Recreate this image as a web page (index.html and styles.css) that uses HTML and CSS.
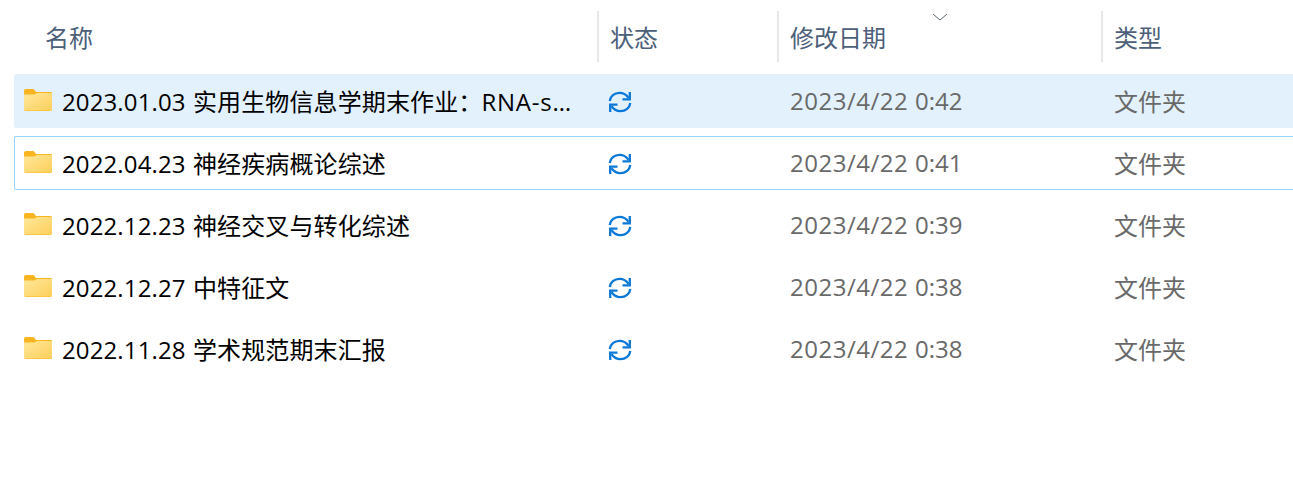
FILE: index.html
```html
<!DOCTYPE html>
<html lang="zh-CN">
<head>
<meta charset="utf-8">
<title>文件列表</title>
<link rel="stylesheet" href="styles.css">
</head>
<body>
<svg class="defs" width="0" height="0" aria-hidden="true">
  <defs>
    <linearGradient id="fg" x1="0" y1="0" x2="1" y2="1">
      <stop offset="0" stop-color="#ffe89a"/>
      <stop offset="1" stop-color="#fdcf5c"/>
    </linearGradient>
    <symbol id="folder" viewBox="0 0 28 22">
      <path d="M0 2.200C0 .9.9 0 2 0h6.500c1 0 1.500.5 2.200 1.200L12 3h14.500c.9 0 1.500.6 1.500 1.500V20c0 1.100-.8 2-2 2H2c-1.200 0-2-.9-2-2z" fill="#f9b51f"/>
      <path d="M0 5.500h10.500L13 4h14c.6 0 1 .4 1 1v15c0 .9-.7 1.400-1.500 1.400h-25C.7 21.400 0 20.900 0 20z" fill="url(#fg)"/>
    </symbol>
    <symbol id="sync" viewBox="0 0 24 22">
      <g fill="none" stroke="#0a78d7" stroke-width="2.300">
        <path d="M1.700 10C2.300 5.200 6.300 1.800 11.500 1.800c3.800 0 6.800 1.700 9 5"/>
        <path d="M21.800 1v7.300h-7.300"/>
        <path d="M22.300 12c-.6 4.800-4.600 8.200-9.800 8.200-3.800 0-6.800-1.700-9-5"/>
        <path d="M2.200 21v-7.300h7.300"/>
      </g>
    </symbol>
  </defs>
</svg>
<main class="list">
  <header class="head">
    <div class="hcell hname">名称</div>
    <div class="hcell hstatus">状态</div>
    <div class="hcell hdate">修改日期
      <svg class="sort" width="16" height="8" viewBox="0 0 16 8"><path d="M1 1l7 6 7-6" fill="none" stroke="#5a6570" stroke-width="1"/></svg>
    </div>
    <div class="hcell htype">类型</div>
  </header>
  <div class="row selected">
    <div class="cname"><svg class="ficon"><use href="#folder"/></svg><span class="ntext">2023.01.03 实用生物信息学期末作业：<span class="latin">RNA-seq</span>数据分析报告</span></div>
    <div class="cstatus"><svg class="sicon"><use href="#sync"/></svg></div>
    <div class="cdate"><span class="day">2023/4/22 </span>0:42</div>
    <div class="ctype">文件夹</div>
  </div>
  <div class="row focused">
    <div class="cname"><svg class="ficon"><use href="#folder"/></svg><span class="ntext">2022.04.23 神经疾病概论综述</span></div>
    <div class="cstatus"><svg class="sicon"><use href="#sync"/></svg></div>
    <div class="cdate"><span class="day">2023/4/22 </span>0:41</div>
    <div class="ctype">文件夹</div>
  </div>
  <div class="row">
    <div class="cname"><svg class="ficon"><use href="#folder"/></svg><span class="ntext">2022.12.23 神经交叉与转化综述</span></div>
    <div class="cstatus"><svg class="sicon"><use href="#sync"/></svg></div>
    <div class="cdate"><span class="day">2023/4/22 </span>0:39</div>
    <div class="ctype">文件夹</div>
  </div>
  <div class="row">
    <div class="cname"><svg class="ficon"><use href="#folder"/></svg><span class="ntext">2022.12.27 中特征文</span></div>
    <div class="cstatus"><svg class="sicon"><use href="#sync"/></svg></div>
    <div class="cdate"><span class="day">2023/4/22 </span>0:38</div>
    <div class="ctype">文件夹</div>
  </div>
  <div class="row">
    <div class="cname"><svg class="ficon"><use href="#folder"/></svg><span class="ntext">2022.11.28 学术规范期末汇报</span></div>
    <div class="cstatus"><svg class="sicon"><use href="#sync"/></svg></div>
    <div class="cdate"><span class="day">2023/4/22 </span>0:38</div>
    <div class="ctype">文件夹</div>
  </div>
</main>
</body>
</html>
```
FILE: styles.css
```css
* { box-sizing: border-box; }
html, body { margin: 0; height: 100%; background: #fff; overflow: hidden; }
body { font-family: "Open Sans", "Noto Sans CJK SC", sans-serif; font-size: 24px; }
.defs { display: block; height: 0; }
.list { display: flex; flex-direction: column; padding-top: 11px; }
.head { display: flex; height: 51px; margin-bottom: 12px; color: #4c607a; }
.hcell { display: flex; align-items: center; height: 51px; position: relative; border-left: 2px solid #e8e8e8; padding-left: 11px; padding-bottom: 1px; }
.hname { width: 597px; border-left: 0; padding-left: 45px; }
.hstatus { width: 180px; }
.hdate { width: 324px; }
.htype { flex: 1; }
.sort { position: absolute; left: 153px; top: 2px; }
.row { display: flex; align-items: center; height: 54px; margin-left: 14px; margin-bottom: 8px; color: #000; border-radius: 2px 0 0 2px; }
.row.selected { background: #e3f1fd; }
.row.focused { border: 1px solid #99d1ff; border-right: 0; }
.cname { display: flex; align-items: center; width: 583px; padding-left: 10px; }
.focused .cname { width: 582px; padding-left: 9px; }
.ficon { width: 28px; height: 22px; flex: none; margin-top: -2px; }
.ntext { margin-left: 10px; width: 514px; white-space: nowrap; overflow: hidden; text-overflow: ellipsis; word-spacing: 1px; letter-spacing: .12px; padding-bottom: 2px; }
.latin { letter-spacing: .8px; margin-left: -1px; }
.cstatus { display: flex; align-items: center; width: 180px; padding-left: 11px; }
.sicon { width: 24px; height: 22px; margin-top: 1px; }
.cdate { width: 324px; padding-left: 13px; padding-bottom: 2px; color: #696969; }
.day { letter-spacing: .5px; }
.ctype { flex: 1; padding-left: 13px; padding-bottom: 2px; color: #696969; }
```
